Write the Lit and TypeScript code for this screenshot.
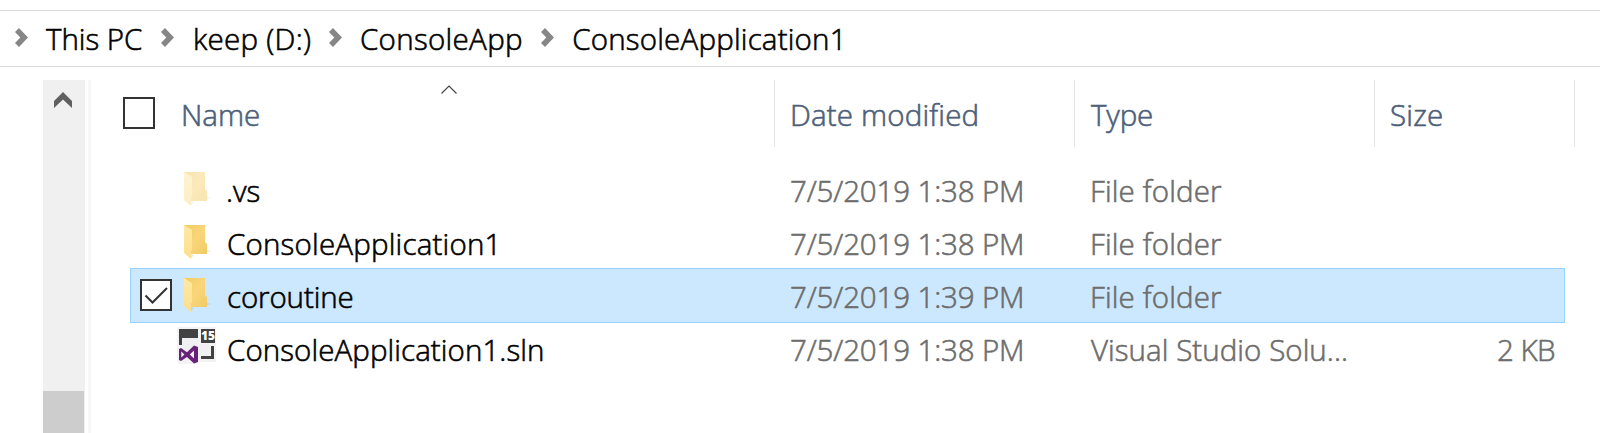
import { LitElement, html, css, nothing } from "lit";
import { customElement } from "lit/decorators.js";
import { styleMap } from "lit/directives/style-map.js";

const FONT = '300 29.5px "Open Sans", "Noto Sans", sans-serif';
const pen = document.createElement("canvas").getContext("2d")!;

/** Text tracked so that its glyphs span exactly `width` pixels. */
const label = (text: string, width: number) => {
  pen.font = FONT;
  const m = pen.measureText(text);
  const left = -m.actualBoundingBoxLeft;
  const ink = m.actualBoundingBoxRight - left;
  const tracking = (width - ink) / (text.length - 1);
  return html`<span class="label" style=${styleMap({
    letterSpacing: `${tracking.toFixed(3)}px`,
    marginLeft: `${-left}px`,
    width: `${width + left}px`,
  })}>${text}</span>`;
};

const crumbs = [
  { text: "This PC", width: 96, advance: 146 },
  { text: "keep (D:)", width: 115, advance: 168 },
  { text: "ConsoleApp", width: 160, advance: 212.2 },
  { text: "ConsoleApplication1", width: 266.5, advance: 320 },
];

const columns = [
  { text: "Name", width: 76 },
  { text: "Date modified", width: 184.5 },
  { text: "Type", width: 61 },
  { text: "Size", width: 51 },
];

interface Entry {
  icon: "hidden" | "folder" | "solution";
  name: string; nameWidth: number;
  date: string;
  type: string; typeWidth: number;
  size?: string;
  selected?: boolean;
}

const entries: Entry[] = [
  { icon: "hidden", name: ".vs", nameWidth: 31.5, date: "7/5/2019 1:38 PM", type: "File folder", typeWidth: 130 },
  { icon: "folder", name: "ConsoleApplication1", nameWidth: 266.5, date: "7/5/2019 1:38 PM", type: "File folder", typeWidth: 130 },
  { icon: "folder", name: "coroutine", nameWidth: 124.5, date: "7/5/2019 1:39 PM", type: "File folder", typeWidth: 130, selected: true },
  { icon: "solution", name: "ConsoleApplication1.sln", nameWidth: 314, date: "7/5/2019 1:38 PM", type: "Visual Studio Solu...", typeWidth: 255, size: "2 KB" },
];

const chevron = html`<svg class="chevron" width="13" height="19" viewBox="0 0 13 19">
  <path d="M4 0L13 9.5L4 19L0 15L5.3 9.5L0 4Z" fill="#868686" /></svg>`;

const folderIcon = html`<svg width="42" height="45" viewBox="0 0 42 45">
  <defs>
    <linearGradient id="back" x1="0" y1="0" x2="1" y2="1">
      <stop offset="0" stop-color="#f0cb64" /><stop offset="0.5" stop-color="#fad67a" /><stop offset="1" stop-color="#f0cb66" />
    </linearGradient>
    <linearGradient id="flap" x1="0" y1="0" x2="0" y2="1">
      <stop offset="0" stop-color="#ffe9a4" /><stop offset="1" stop-color="#fddf8b" />
    </linearGradient>
  </defs>
  <path d="M13 36L18 37L15 40Z M31 32L36 33L31 34Z" fill="#8a7440" opacity="0.16" />
  <path d="M8 7H29V24L31 26V36H10Z" fill="url(#back)" />
  <path d="M8 7L16 12V32H15V41L8 35Z" fill="url(#flap)" />
</svg>`;

const solutionIcon = html`<svg width="42" height="45" viewBox="0 0 42 45">
  <path d="M2 4H41V39H21L20 41H4L2 38Z" fill="#f3f3f3" />
  <path d="M4 6H23V15H7V22H4Z" fill="#424242" />
  <path d="M7 15H23V21H35V33H24L22 22L12 28L7 24Z" fill="#f0eff1" />
  <path d="M26 6H40V20H26Z" fill="#424242" />
  <text class="badge" x="33" y="17.2" text-anchor="middle" fill="#fff">15</text>
  <path d="M36 23H39V36H26V33H36Z" fill="#424242" />
  <path fill-rule="evenodd" fill="#68217a" d="M4 26L6 25L12 29.2L19 22.5L23 24V39L19 40.5L12 34L6 38L4 37Z M6.3 28.5V34.5L9.5 31.5Z M19 27.5L14.8 31.5L19 35.5Z" />
</svg>`;

@customElement("app-root")
export class AppRoot extends LitElement {
  static styles = css`
    :host {
      display: flex;
      flex-direction: column;
      width: 1600px;
      height: 433px;
      overflow: hidden;
      background: #fff;
      color: #000;
      font: 300 29.5px/40px "Open Sans", "Noto Sans", sans-serif;
    }
    svg { display: block; flex: none; }
    .label {
      display: inline-block;
      white-space: nowrap;
      flex: none;
      -webkit-text-stroke: 0.6px currentColor;
    }
    .path {
      box-sizing: border-box;
      display: flex;
      align-items: flex-start;
      height: 57px;
      margin-top: 10px;
      padding: 8px 0 0 15px;
      border: solid #d9d9d9;
      border-width: 1px 0;
    }
    .crumb { display: flex; flex: none; }
    .chevron { margin: 9px 19px 0 0; }
    .crumb:first-child .chevron { margin-right: 18px; }
    .crumb:nth-child(2) .chevron { margin-right: 21px; }
    .main { display: flex; flex: 1; padding: 13px 0 0 43px; }
    .scroll {
      display: flex;
      flex-direction: column;
      justify-content: space-between;
      width: 42px;
      background: #f0f0f0;
    }
    .up { margin: 12px 0 0 11px; }
    .thumb { width: 41px; height: 42px; background: #cdcdcd; }
    .edge { width: 3px; margin-left: 3px; background: #f7f7f7; }
    .list { flex: 1; }
    .head {
      display: grid;
      grid-template-columns: 684px 300px 300px 200px;
      height: 67px;
      color: #4c607a;
    }
    .col {
      display: flex;
      align-items: flex-start;
      box-sizing: border-box;
      padding: 15px 0 0 16px;
      border-right: 1px solid #e5e5e5;
    }
    .col:nth-child(2) { padding-left: 17px; }
    .col.first { padding-left: 32px; }
    .box {
      box-sizing: border-box;
      flex: none;
      width: 32px;
      height: 32px;
      border: 2px solid #333;
      background: #fff;
    }
    .head .box { margin: 2px 28px 0 0; }
    .caret { margin: -10px 0 0 182px; }
    .rows { padding: 16px 0 0 39px; }
    .row {
      box-sizing: border-box;
      display: grid;
      grid-template-columns: 48px 49px 563px 300px 300px 163px;
      width: 1435px;
      height: 53px;
      padding: 1px;
      color: #6d6d6d;
    }
    .row.selected {
      height: 55px;
      margin: -1px 0;
      padding: 1px 0;
      border: 1px solid #99d1ff;
      background: #cce8ff;
    }
    .cell { padding-top: 7px; white-space: nowrap; }
    .name { color: #000; }
    .pick { padding: 9px 0 0 9px; }
    .size { text-align: right; }
    .icon { margin: 1px 0 0 -3px; }
    .icon.solution { margin: 0 0 0 -4px; }
    .icon.hidden { opacity: 0.5; }
    .badge { font: 800 12px "Open Sans", sans-serif; }
    .type.folder, .type.hidden { padding-left: 1px; }
  `;

  private row(e: Entry) {
    return html`<div class="row ${e.selected ? "selected" : ""}">
      <div class="pick">${e.selected
        ? html`<div class="box"><svg width="28" height="28" viewBox="0 0 28 28">
            <path d="M3.5 14.5L10.5 21.5L25 7" fill="none" stroke="#333" stroke-width="2" /></svg></div>`
        : nothing}</div>
      <div class="icon ${e.icon}">${e.icon === "solution" ? solutionIcon : folderIcon}</div>
      <div class="cell name">${label(e.name, e.nameWidth)}</div>
      <div class="cell">${label(e.date, 231)}</div>
      <div class="cell type ${e.icon}">${label(e.type, e.typeWidth)}</div>
      <div class="cell size">${e.size ? label(e.size, 56) : nothing}</div>
    </div>`;
  }

  render() {
    return html`
      <nav class="path">${crumbs.map(c => html`<div class="crumb" style=${styleMap({ width: `${c.advance}px` })}>${chevron}${label(c.text, c.width)}</div>`)}</nav>
      <div class="main">
        <div class="scroll">
          <svg class="up" width="18" height="16" viewBox="0 0 18 16"><path d="M0 9L9 0L18 9V16L9 7.5L0 16Z" fill="#606060" /></svg>
          <div class="thumb"></div>
        </div>
        <div class="edge"></div>
        <div class="list">
          <div class="head">${columns.map((c, i) => html`<div class="col ${i === 0 ? "first" : ""}">
            ${i === 0 ? html`<div class="box"></div>` : nothing}
            ${label(c.text, c.width)}
            ${i === 0 ? html`<svg class="caret" width="16" height="9" viewBox="0 0 16 9">
              <path d="M0.5 8.5L8 1L15.5 8.5" fill="none" stroke="#444" stroke-width="1.2" /></svg>` : nothing}
          </div>`)}</div>
          <div class="rows">${entries.map(e => this.row(e))}</div>
        </div>
      </div>`;
  }
}
